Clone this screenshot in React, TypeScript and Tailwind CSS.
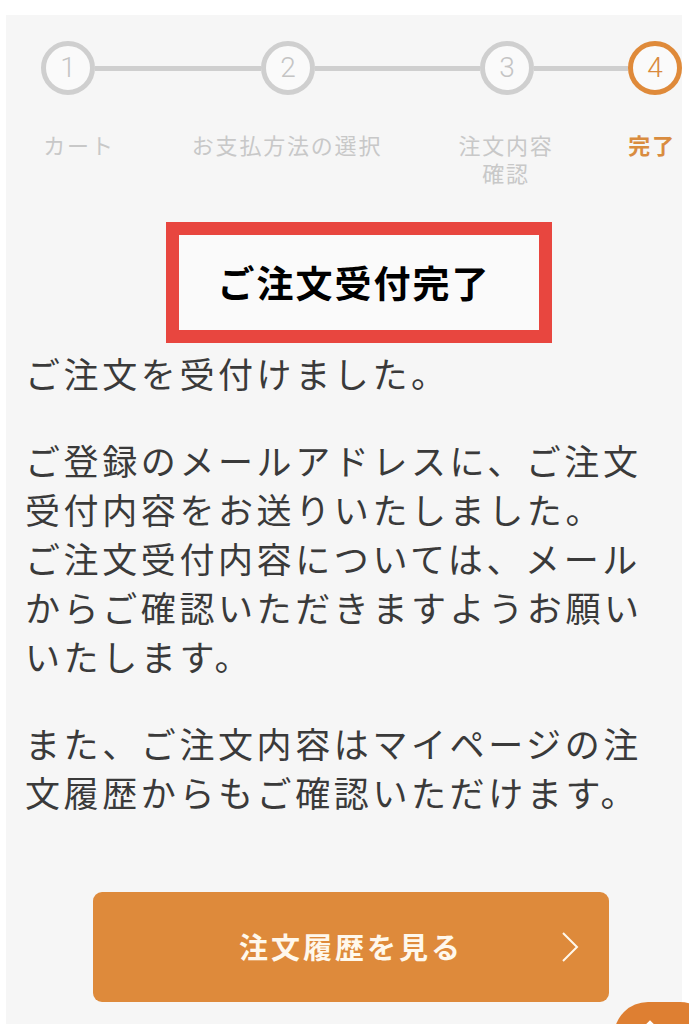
import React from "react";

const jp = { fontFamily: '"Noto Sans CJK JP", "Noto Sans", sans-serif' };

function Circle({ n, active }: { n: number; active?: boolean }) {
  return (
    <div
      className={
        active
          ? "w-[54px] h-[54px] shrink-0 rounded-full border-[5px] border-[#df8a3a] bg-[#fafafa] flex items-center justify-center text-[28px] font-light text-[#d98a3e]"
          : "w-[54px] h-[54px] shrink-0 rounded-full border-[5px] border-[#cfcfcf] bg-[#fafafa] flex items-center justify-center text-[28px] font-light text-[#c4c4c4]"
      }
      style={{ fontFamily: 'Roboto, "Noto Sans", sans-serif' }}
    >
      {n}
    </div>
  );
}

export default function App() {
  return (
    <div
      className="relative w-[689px] h-[1024px] overflow-hidden bg-white pt-[15px] pl-[6px] pr-[7px]"
      style={jp}
    >
      <div className="h-full bg-[#f6f6f6]">
        {/* stepper */}
        <div className="pt-[26px] pl-[35px] flex items-center">
          <Circle n={1} />
          <div className="w-[166px] h-[5px] bg-[#cfcfcf]" />
          <Circle n={2} />
          <div className="w-[165px] h-[5px] bg-[#cfcfcf]" />
          <Circle n={3} />
          <div className="w-[94px] h-[5px] bg-[#cfcfcf]" />
          <Circle n={4} active />
        </div>
        <div className="mt-[35px] flex text-[22px] leading-[28px] tracking-[1.8px] text-[#c8c8c8]">
          <div className="ml-[23px] w-[100px] text-center">カート</div>
          <div className="ml-[48px] w-[220px] text-center">お支払方法の選択</div>
          <div className="ml-[49px] w-[120px] text-center">
            注文内容
            <br />
            確認
          </div>
          <div className="ml-[56px] w-[60px] text-center font-bold text-[#d98c3f]">完了</div>
        </div>

        {/* heading */}
        <div className="mt-[36px] ml-[160px] w-[386px] h-[121px] border-[13px] border-[#e8463f] bg-[#fafafa] flex items-center justify-center">
          <h1 className="mr-[10px] text-[37px] font-bold tracking-[2px] text-black leading-none">ご注文受付完了</h1>
        </div>

        {/* body */}
        <div className="pl-[19px] mt-[5px] text-[35px] leading-[49px] tracking-[3.6px] text-[#3a3a3a] flex flex-col gap-[38px]">
          <p>ご注文を受付けました。</p>
          <p>
            ご登録のメールアドレスに、ご注文
            <br />
            受付内容をお送りいたしました。
            <br />
            ご注文受付内容については、メール
            <br />
            からご確認いただきますようお願い
            <br />
            いたします。
          </p>
          <p>
            また、ご注文内容はマイページの注
            <br />
            文履歴からもご確認いただけます。
          </p>
        </div>

        {/* button */}
        <div className="mt-[76px] ml-[87px] w-[516px] h-[110px] rounded-[9px] bg-[#de8a3b] relative flex items-center justify-center">
          <span className="text-[29px] font-bold tracking-[3px] text-[#fff8ec]">注文履歴を見る</span>
          <svg
            className="absolute right-[29px] top-1/2 -translate-y-1/2"
            width="20"
            height="32"
            viewBox="0 0 20 32"
            fill="none"
          >
            <polyline points="3,2 17,16 3,30" stroke="#fff8ec" strokeWidth="2" strokeLinejoin="miter" />
          </svg>
        </div>
      </div>

      {/* scroll-to-top */}
      <div className="absolute left-[614px] top-[1002px] w-[100px] h-[100px] rounded-[34px] bg-[#de7f32]">
        <svg className="absolute left-[26px] top-[18px]" width="20" height="12" viewBox="0 0 20 12" fill="none">
          <polyline points="2,10 10,2 18,10" stroke="#ffffff" strokeWidth="2.5" />
        </svg>
      </div>
    </div>
  );
}
